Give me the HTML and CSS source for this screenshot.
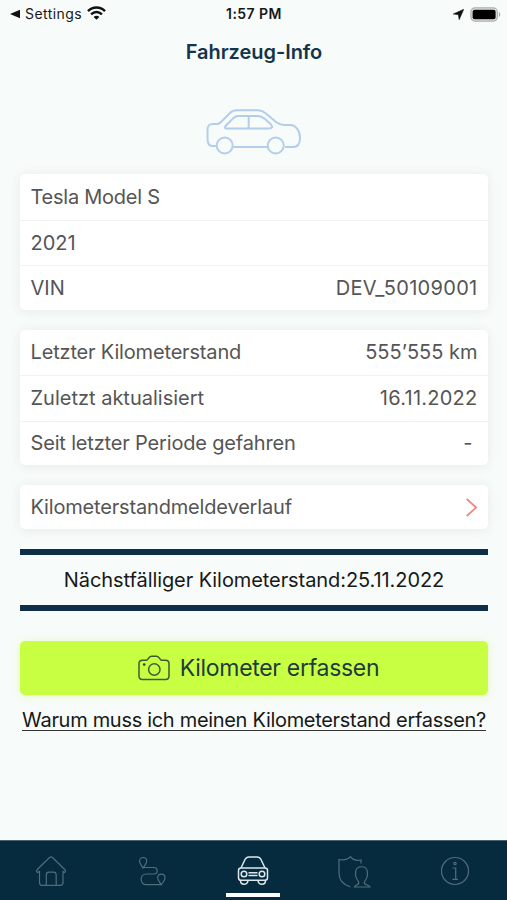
FILE: index.html
```html
<!DOCTYPE html>
<html lang="de">
<head>
  <meta charset="UTF-8">
  <meta name="viewport" content="width=device-width, initial-scale=1.0">
  <title>Fahrzeug-Info</title>
  <link rel="stylesheet" href="styles.css">
</head>
<body>
  <div class="status-bar">
    <div class="status-left">
      <svg width="10" height="10" viewBox="0 0 10 10"><path d="M0 5 L10 .8 V9.2 Z" fill="#111"/></svg>
      <span class="back-app">Settings</span>
      <svg class="wifi" width="19" height="14" viewBox="0 0 19 14" fill="none" stroke="#111" stroke-width="2.4">
        <path d="M1 5.1 C5.8 .2 13.2 .2 18 5.1"/>
        <path d="M4.1 8.3 C7.2 5.2 11.8 5.2 14.9 8.3"/>
        <path d="M9.5 13.8 L6.6 10.9 C8.2 9.3 10.8 9.3 12.4 10.9 Z" fill="#111" stroke="none"/>
      </svg>
    </div>
    <span class="clock">1:57 PM</span>
    <div class="status-right">
      <svg width="11" height="11" viewBox="0 0 11 11"><path d="M10.8 .2 L6.2 10.7 L5.3 5.7 L.2 5 Z" fill="#111" stroke="#111" stroke-width=".5"/></svg>
      <svg width="31" height="15" viewBox="0 0 31 15">
        <rect x=".9" y=".9" width="26.4" height="13.2" rx="4" fill="#e2e5e4" stroke="#a9adac" stroke-width="1.2"/>
        <rect x="2.6" y="2.7" width="23" height="9.6" rx="2" fill="#000"/>
        <path d="M28.8 5 C30.8 5.7 30.8 9.3 28.8 10 Z" fill="#a9adac"/>
      </svg>
    </div>
  </div>

  <h1>Fahrzeug-Info</h1>

  <svg class="car" width="96" height="48" viewBox="0 0 96 48" fill="none" stroke="#b3cdec" stroke-width="2">
    <path d="M10 44 H6 C3 44 1.5 41 1.5 36 V28 C1.5 23.5 3 22 7 22 H11 C14 22 15 20.5 17 18 L24 11 C26.5 8.3 28 8.3 31 8.3 H52 C55.5 8.3 57.5 9.5 60 11.5 L70 20 C73 22.3 74 23 78 23 H84 C90 23 94 29 94 36 C94 41 92.5 45 87 45 H79 M61 45 H27.5"/>
    <path d="M20.5 26.5 H63 C66.5 26.5 67 25 65 22.5 L59 17 C56.5 15 55 14 52 14 H32 C29 14 27.5 15.5 25.5 18 L19.5 24 C18.3 25.5 19 26.5 20.5 26.5 Z M42.7 14 V26.5"/>
    <circle cx="18.7" cy="43.5" r="8"/>
    <circle cx="69.7" cy="43.5" r="8"/>
  </svg>

  <main>
    <div class="card">
      <div class="row"><span class="model">Tesla Model S</span></div>
      <div class="row"><span>2021</span></div>
      <div class="row"><span>VIN</span><span class="vin">DEV_50109001</span></div>
    </div>

    <div class="card">
      <div class="row"><span class="label">Letzter Kilometerstand</span><span>555’555 km</span></div>
      <div class="row"><span>Zuletzt aktualisiert</span><span class="date">16.11.2022</span></div>
      <div class="row"><span class="label">Seit letzter Periode gefahren</span><span class="empty">-</span></div>
    </div>

    <div class="card">
      <div class="row">
        <span class="label">Kilometerstandmeldeverlauf</span>
        <svg width="12" height="19" viewBox="0 0 12 19" fill="none" stroke="#f28482" stroke-width="1.7"><path d="M.7 1 L10.2 9.5 L.7 18"/></svg>
      </div>
    </div>

    <div class="due"><span>Nächstfälliger Kilometerstand:25.11.2022</span></div>

    <button class="capture">
      <svg width="32" height="26" viewBox="0 0 32 26" fill="none" stroke="#3d5b3a" stroke-width="1.5">
        <path d="M4.5 5.2 H8.5 C10.3 5.2 10.3 1.2 13.5 1.2 H18.5 C21.7 1.2 21.7 5.2 23.5 5.2 H27.5 C29.8 5.2 31 6.5 31 8.5 V21 C31 23.3 29.8 24.5 27.5 24.5 H4.5 C2.2 24.5 1 23.3 1 21 V8.5 C1 6.5 2.2 5.2 4.5 5.2 Z"/>
        <circle cx="16.3" cy="14.5" r="5.7"/>
        <circle cx="6.2" cy="9.5" r="1.3" fill="#24402f" stroke="none"/>
      </svg>
      <span>Kilometer erfassen</span>
    </button>

    <a class="why" href="#">Warum muss ich meinen Kilometerstand erfassen?</a>
  </main>

  <nav>
    <a class="tab" href="#">
      <svg width="32" height="32" viewBox="0 0 32 32">
        <path d="M4.5 16.5 L2.5 17.5 C1.3 16.5 1.3 15.5 2.3 14.5 L14.5 2.5 C15.5 1.6 16.5 1.6 17.5 2.5 L29.7 14.5 C30.7 15.5 30.7 16.5 29.5 17.5 L28 16.5 V27.5 C28 29.5 27.3 30.3 25.5 30.3 H7 C5.2 30.3 4.5 29.5 4.5 27.5 Z"/>
        <path d="M11.3 30.3 V20 C11.3 18 12.3 17.2 14 17.2 H18.5 C20.2 17.2 21.2 18 21.2 20 V30.3"/>
      </svg>
    </a>
    <a class="tab" href="#">
      <svg width="32" height="32" viewBox="0 0 32 32">
        <path d="M7 13 C5.5 10.5 3.5 8.8 3.5 6.3 C3.5 1.2 10.7 1.2 10.7 6.3 C10.7 8.8 8.5 10.5 7 13 Z"/>
        <path d="M8 12.5 H18 C22.2 12.5 22.2 19 18 19 H10.5 C3.3 19 3.3 29.7 10.5 29.7 H25"/>
        <path d="M25.3 29.7 C23.8 27.2 21.7 25.5 21.7 23 C21.7 17.9 29 17.9 29 23 C29 25.5 26.8 27.2 25.3 29.7 Z"/>
      </svg>
    </a>
    <a class="tab active" href="#">
      <svg width="32" height="32" viewBox="0 0 32 32">
        <path d="M4 13 L8 4.5 C9 2.5 10 2 12 2 H20 C22 2 23 2.5 24 4.5 L28 13"/>
        <path d="M4 13 H28 C29.7 13 30.5 14 30.5 15.5 V22.5 C30.5 24.5 29.7 25.3 28 25.3 H4 C2.3 25.3 1.5 24.5 1.5 22.5 V15.5 C1.5 14 2.3 13 4 13 Z"/>
        <circle cx="7" cy="19" r="2.8"/>
        <circle cx="25" cy="19" r="2.8"/>
        <path d="M11.5 17.8 H20.5 M11.5 20.5 H20.5"/>
        <path d="M3.5 25.5 C3.5 30.5 10.5 30.5 11 25.5 M21 25.5 C21.5 30.5 28.5 30.5 28.5 25.5"/>
      </svg>
    </a>
    <a class="tab" href="#">
      <svg width="36" height="34" viewBox="0 0 36 34">
        <path d="M25 8.500 V5 C20.5 6 16.5 4.5 14.5 1.7 C12 4.5 8 5.5 3 4.5 V18 C3 25.500 8 30 14.5 32"/>
        <path d="M18.5 32 C19 29 23.5 31 22.7 27 C20 23.5 19 19.5 19.8 16 C20.7 10.3 30.3 10.3 31.2 16 C32 19.5 31 23.5 28.3 27 C27.5 31 33.5 29 34 32 Z"/>
      </svg>
    </a>
    <a class="tab" href="#">
      <svg width="32" height="32" viewBox="0 0 32 32">
        <circle cx="16" cy="16" r="13.5"/>
        <circle cx="16" cy="8.5" r="1.2"/>
        <path d="M13.5 13 H16.7 V24 M13.3 24.3 H19"/>
      </svg>
    </a>
  </nav>
</body>
</html>
```
FILE: styles.css
```css
:root {
  --navy: #062b3e;
  --bar: #0e2f47;
  --title: #14344c;
  --text: #555555;
  --lime: #c8ff43;
  --bg: #f7fbfa;
}

* {
  margin: 0;
  padding: 0;
  box-sizing: border-box;
}

body {
  height: 900px;
  display: flex;
  flex-direction: column;
  background: var(--bg);
  font-family: Inter, 'Liberation Sans', sans-serif;
  font-size: 20px;
  line-height: 24px;
  color: #181818;
  overflow: hidden;
}

svg {
  display: block;
  flex: none;
}

.status-bar {
  height: 28px;
  padding: 0 6px 0 10px;
  display: grid;
  grid-template-columns: 1fr auto 1fr;
  align-items: center;
  font-size: 14px;
}

.status-left,
.status-right {
  display: flex;
  align-items: center;
}

.back-app {
  margin-left: 5px;
  letter-spacing: 0.45px;
}

.wifi {
  margin: -2px 0 0 5px;
}

.clock {
  margin-right: 3px;
  font-weight: 600;
  font-size: 14px;
  letter-spacing: 0.45px;
}

.status-right {
  justify-content: flex-end;
  gap: 6px;
}

h1 {
  height: 48px;
  padding-left: 1px;
  font-size: 20px;
  font-weight: 600;
  line-height: 49px;
  letter-spacing: -0.05px;
  text-align: center;
  color: var(--title);
}

.car {
  margin: 26px auto 0;
  overflow: visible;
}

main {
  margin-top: 24.3px;
  padding: 0 19px 0 20px;
  display: flex;
  flex-direction: column;
}

.card {
  margin-bottom: 19.8px;
  background: #fff;
  border-radius: 5px;
  box-shadow: 0 1px 12px rgba(60, 80, 80, 0.09);
  color: var(--text);
}

.row {
  height: 45.5px;
  padding: 0 10.5px;
  display: flex;
  align-items: center;
  justify-content: space-between;
}

.row:last-child {
  height: 44.5px;
}

.row + .row {
  border-top: 1px solid #f0f2f2;
}

.label {
  letter-spacing: -0.17px;
}

.model {
  letter-spacing: -0.25px;
}

.vin {
  letter-spacing: 0.3px;
}

.date {
  letter-spacing: 0.25px;
}

.empty {
  margin-right: 5px;
}

.due {
  height: 61.5px;
  display: flex;
  align-items: center;
  justify-content: center;
  border: solid var(--bar);
  border-width: 6px 0;
  letter-spacing: -0.08px;
}

.capture {
  height: 54px;
  margin-top: 30.2px;
  padding-left: 9px;
  display: flex;
  align-items: center;
  justify-content: center;
  gap: 10px;
  border: none;
  border-radius: 5px;
  background: var(--lime);
  box-shadow: 0 1px 8px rgba(200, 255, 67, 0.35);
  font-family: inherit;
  font-size: 23px;
  letter-spacing: -0.3px;
  color: #1d3b40;
}

.why {
  height: 36px;
  padding-top: 13px;
  align-self: center;
  color: inherit;
  text-decoration: none;
  border-bottom: 1px solid #333;
  letter-spacing: -0.31px;
  white-space: nowrap;
}

nav {
  height: 60px;
  margin-top: auto;
  padding-right: 2px;
  display: flex;
  background: var(--navy);
  border-top: 1px solid #49636f;
}

.tab {
  flex: 1;
  padding-top: 14px;
  display: flex;
  flex-direction: column;
  align-items: center;
}

.tab svg {
  fill: none;
  stroke: #526d7a;
  stroke-width: 1.2;
}

.active svg {
  stroke: #dce8ee;
  stroke-width: 1.5;
}

.active::after {
  content: '';
  width: 54px;
  height: 4px;
  margin-top: 6px;
  background: #fff;
}
```
